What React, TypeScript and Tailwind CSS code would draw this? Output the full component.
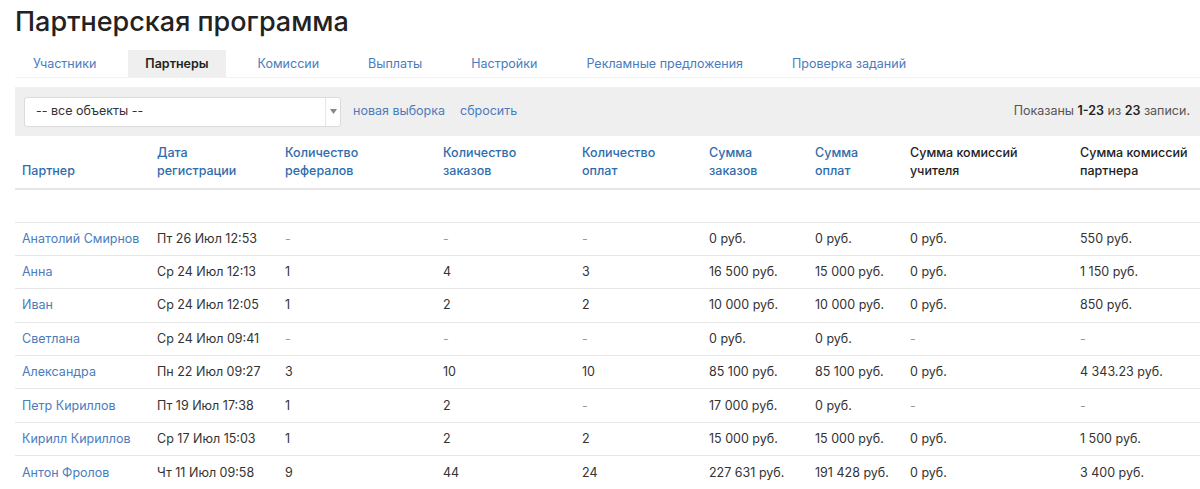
const tabs = [
  'Участники',
  'Партнеры',
  'Комиссии',
  'Выплаты',
  'Настройки',
  'Рекламные предложения',
  'Проверка заданий',
];

const columns = [
  { top: '', bottom: 'Партнер', link: true, w: 'w-[135px]' },
  { top: 'Дата', bottom: 'регистрации', link: true, w: 'w-[128px]' },
  { top: 'Количество', bottom: 'рефералов', link: true, w: 'w-[158px]' },
  { top: 'Количество', bottom: 'заказов', link: true, w: 'w-[139px]' },
  { top: 'Количество', bottom: 'оплат', link: true, w: 'w-[127px]' },
  { top: 'Сумма', bottom: 'заказов', link: true, w: 'w-[106px]' },
  { top: 'Сумма', bottom: 'оплат', link: true, w: 'w-[95px]' },
  { top: 'Сумма комиссий', bottom: 'учителя', link: false, w: 'w-[170px]' },
  { top: 'Сумма комиссий', bottom: 'партнера', link: false, w: 'w-[160px]' },
];

const rows = [
  ['Анатолий Смирнов', 'Пт 26 Июл 12:53', '-', '-', '-', '0 руб.', '0 руб.', '0 руб.', '550 руб.'],
  ['Анна', 'Ср 24 Июл 12:13', '1', '4', '3', '16 500 руб.', '15 000 руб.', '0 руб.', '1 150 руб.'],
  ['Иван', 'Ср 24 Июл 12:05', '1', '2', '2', '10 000 руб.', '10 000 руб.', '0 руб.', '850 руб.'],
  ['Светлана', 'Ср 24 Июл 09:41', '-', '-', '-', '0 руб.', '0 руб.', '-', '-'],
  ['Александра', 'Пн 22 Июл 09:27', '3', '10', '10', '85 100 руб.', '85 100 руб.', '0 руб.', '4 343.23 руб.'],
  ['Петр Кириллов', 'Пт 19 Июл 17:38', '1', '2', '-', '17 000 руб.', '0 руб.', '-', '-'],
  ['Кирилл Кириллов', 'Ср 17 Июл 15:03', '1', '2', '2', '15 000 руб.', '15 000 руб.', '0 руб.', '1 500 руб.'],
  ['Антон Фролов', 'Чт 11 Июл 09:58', '9', '44', '24', '227 631 руб.', '191 428 руб.', '0 руб.', '3 400 руб.'],
];

export default function App() {
  return (
    <div className="h-[489px] w-[1200px] overflow-hidden bg-white pl-[15px] font-['Inter',sans-serif] text-[12.5px] text-[#333]">
      <h1 className="pt-[4px] text-[27px] font-medium leading-[36px] text-[#222]">
        Партнерская программа
      </h1>

      {/* tabs */}
      <div className="mt-[10px] flex gap-[15px] border-b border-[#f2f2f2] pl-[1px]">
        {tabs.map(t => (
          <div
            key={t}
            className={
              t === 'Партнеры'
                ? 'bg-[#efefef] px-[17px] leading-[27px] font-semibold text-[#222]'
                : 'px-[17px] leading-[27px] text-[#4a7cbd]'
            }
          >
            {t}
          </div>
        ))}
      </div>

      {/* filter bar */}
      <div className="mt-[9px] flex h-[49px] items-center bg-[#efefef] pl-[9px] pr-[10px]">
        <div className="flex h-[30px] w-[317px] items-stretch rounded-[3px] border border-[#dcdcdc] bg-white">
          <div className="flex flex-1 items-center pl-[11px] text-[#333]">-- все объекты --</div>
          <div className="flex w-[15px] items-center justify-center border-l border-[#e6e6e6]">
            <svg width="7" height="5" viewBox="0 0 7 5">
              <path d="M0 0h7L3.5 5z" fill="#888" />
            </svg>
          </div>
        </div>
        <span className="ml-[12px] text-[#4a7cbd]">новая выборка</span>
        <span className="ml-[15px] text-[#4a7cbd]">сбросить</span>
        <span className="ml-auto text-[#555]">
          Показаны <b className="font-semibold text-[#222]">1-23</b> из <b className="font-semibold text-[#222]">23</b> записи.
        </span>
      </div>

      {/* table */}
      <table className="w-[1218px] table-fixed border-collapse">
        <thead>
          <tr className="border-b-2 border-[#e6e6e6]">
            {columns.map((c, i) => (
              <th
                key={i}
                className={`${c.w} h-[53px] px-[7px] pb-[8px] text-left align-bottom font-medium leading-[18px] ${
                  c.link ? 'text-[#2f6cad]' : 'text-[#222]'
                }`}
              >
                {c.top && <div>{c.top}</div>}
                <div>{c.bottom}</div>
              </th>
            ))}
          </tr>
        </thead>
        <tbody>
          <tr className="border-b border-[#e6e6e6]">
            <td colSpan={9} className="h-[33px]"></td>
          </tr>
          {rows.map(r => (
            <tr key={r[0]} className="border-b border-[#e6e6e6] last:border-b-0">
              {r.map((v, i) => (
                <td
                  key={i}
                  className={`h-[33.4px] px-[7px] whitespace-nowrap leading-[18px] ${
                    i === 0 ? 'text-[#4a7cbd]' : v === '-' ? 'text-[#999]' : 'text-[#333]'
                  }`}
                >
                  {v}
                </td>
              ))}
            </tr>
          ))}
        </tbody>
      </table>
    </div>
  );
}
